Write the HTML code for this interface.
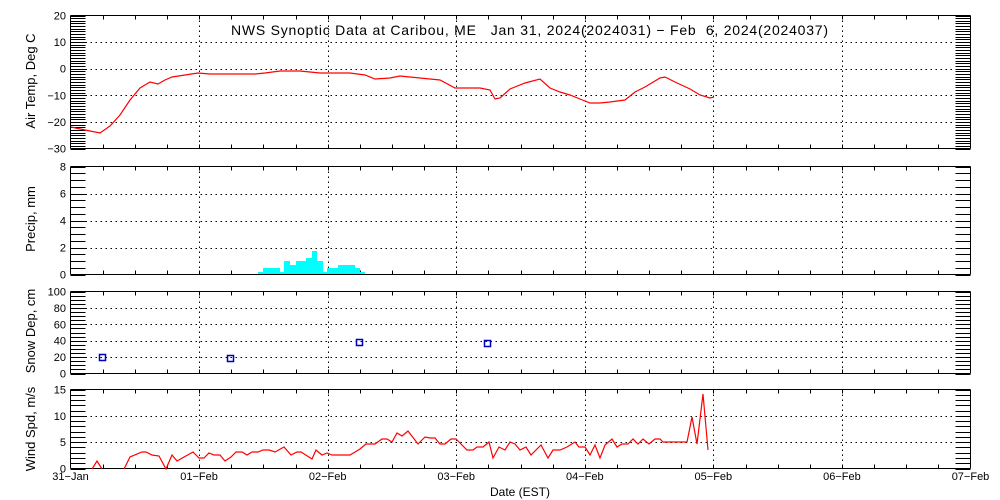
<!DOCTYPE html>
<html><head><meta charset="utf-8"><style>
html,body{margin:0;padding:0;background:#fff;width:1000px;height:500px;overflow:hidden}
svg{display:block;font-family:"Liberation Sans",sans-serif}
text{font-size:11px;fill:#000}
</style></head><body>
<svg id="s" width="1000" height="500" viewBox="0 0 1000 500" xmlns="http://www.w3.org/2000/svg">
<g id="ax" stroke="#000" stroke-width="1" fill="none" shape-rendering="crispEdges"></g>
<g id="tx"></g>
<text x="231" y="35" xml:space="preserve" textLength="597" style="font-size:14px;white-space:pre">NWS Synoptic Data at Caribou, ME   Jan 31, 2024(2024031) − Feb  6, 2024(2024037)</text>
<text transform="translate(35,81) rotate(-90)" text-anchor="middle" style="font-size:13px">Air Temp, Deg C</text>
<text transform="translate(35,219) rotate(-90)" text-anchor="middle" style="font-size:13px">Precip, mm</text>
<text transform="translate(35,331) rotate(-90)" text-anchor="middle" style="font-size:13px">Snow Dep, cm</text>
<text transform="translate(35,429) rotate(-90)" text-anchor="middle" style="font-size:13px">Wind Spd, m/s</text>
<text x="520" y="496" text-anchor="middle" style="font-size:12px">Date (EST)</text>
<polyline fill="none" stroke="#f00" stroke-width="1.2" points="71,127 85,130 100,133 110,126 120,115 130,100 140,88 150,82 158,84 165,80 172,77 185,75 198,73 210,74 230,74 255,74 265,73 280,71 300,71 320,73 350,73 365,75 375,79 390,78 400,76 420,78 440,80 455,88 480,88 490,90 495,99 500,98 510,89 525,83 540,79 550,88 560,92 570,95 580,99 590,103 600,103 610,102 625,100 635,92 645,87 660,78 665,77 675,82 690,89 700,95 710,98 714,97"/>
<g fill="#00ffff">
<rect x="258" y="272" width="5" height="2"/><rect x="263" y="268" width="17" height="6"/><rect x="280" y="272" width="4" height="2"/>
<rect x="284" y="261" width="6" height="13"/><rect x="290" y="265" width="6" height="9"/><rect x="296" y="261" width="10" height="13"/>
<rect x="306" y="258" width="6" height="16"/><rect x="312" y="251" width="5" height="23"/><rect x="317" y="261" width="6" height="13"/>
<rect x="323" y="272" width="4" height="2"/><rect x="327" y="268" width="11" height="6"/><rect x="338" y="265" width="17" height="9"/>
<rect x="355" y="268" width="5" height="6"/><rect x="360" y="272" width="5" height="2"/>
</g>
<g fill="none" stroke="#0000c0" stroke-width="1.5">
<rect x="99.5" y="354.5" width="6" height="6"/><rect x="227.5" y="355.5" width="6" height="6"/><rect x="356.5" y="339.5" width="6" height="6"/><rect x="484.5" y="340.5" width="6" height="6"/>
</g>
<polyline fill="none" stroke="#f00" stroke-width="1.2" points="92,469 97,461 102,469"/>
<polyline fill="none" stroke="#f00" stroke-width="1.2" points="124,469 130,457 142,452 146,452 152,455 159,456 166,469 172,455 177,461 193,452 199,458 204,458 209,453 214,455 220,455 225,461 231,457 236,452 242,452 247,455 252,452 258,452 263,450 269,450 275,452 284,447 291,455 297,452 301,452 312,459 316,450 322,455 327,453 332,455 350,455 360,449 366,444 375,444 382,439 387,439 392,442 397,433 402,436 408,431 418,444 425,437 430,438 435,438 440,444 445,444 451,439 456,439 467,450 473,450 477,447 483,447 489,442 493,458 499,447 505,450 510,442 515,444 520,450 526,447 531,455 541,445 548,458 553,450 560,450 567,447 575,442 579,447 585,447 590,455 595,445 600,458 605,445 612,439 617,447 622,444 628,444 633,439 638,444 643,439 649,444 655,439 660,439 663,442 687,442 692,417 697,444 703,394 708,450"/>
</svg>
<script>
var ax=document.getElementById('ax'),tx=document.getElementById('tx'),NS='http://www.w3.org/2000/svg';
function L(x1,y1,x2,y2,d){var l=document.createElementNS(NS,'line');l.setAttribute('x1',x1);l.setAttribute('y1',y1);l.setAttribute('x2',x2);l.setAttribute('y2',y2);if(d)l.setAttribute('stroke-dasharray','1.5,3.5');ax.appendChild(l);}
function T(x,y,s,a){var t=document.createElementNS(NS,'text');t.setAttribute('x',x);t.setAttribute('y',y);t.setAttribute('text-anchor',a||'end');t.textContent=s;tx.appendChild(t);}
var X0=70.5,X1=970.5,DW=900/7;
var P=[{t:15,b:148,mn:-30,mx:20,minor:1,maj:10},{t:166,b:274,mn:0,mx:8,minor:0.5,maj:2},{t:291,b:373,mn:0,mx:100,minor:5,maj:20},{t:389,b:468,mn:0,mx:15,minor:1,maj:5}];
P.forEach(function(p,i){
 var t=p.t+.5,b=p.b+.5;
 L(X0,t,X1,t);L(X0,b,X1,b);L(X0,t,X0,b);L(X1,t,X1,b);
 function Y(v){return b-(v-p.mn)*(b-t)/(p.mx-p.mn);}
 for(var v=p.mn;v<=p.mx+1e-6;v+=p.minor){var y=Math.round(Y(v))+.5;L(X0,y,X0+15,y);L(X1-15,y,X1,y);}
 for(var v=p.mn;v<=p.mx+1e-6;v+=p.maj){var y=Y(v);if(v>p.mn&&v<p.mx)L(X0,Math.round(y)+.5,X1,Math.round(y)+.5,1);T(66,y+4,v<0?'\u2212'+(-v):''+v);}
 for(var k=1;k<28;k++){var x=Math.round(X0+k*DW/4)+.5;L(x,t,x,t+4);L(x,b-4,x,b);}
 for(var d=1;d<7;d++){var x=Math.round(X0+d*DW)+.5;L(x,t,x,b,1);}
});
var days=['31\u2212Jan','01\u2212Feb','02\u2212Feb','03\u2212Feb','04\u2212Feb','05\u2212Feb','06\u2212Feb','07\u2212Feb'];
days.forEach(function(s,d){T(X0+d*DW,480,s,'middle');});
</script>
</body></html>
